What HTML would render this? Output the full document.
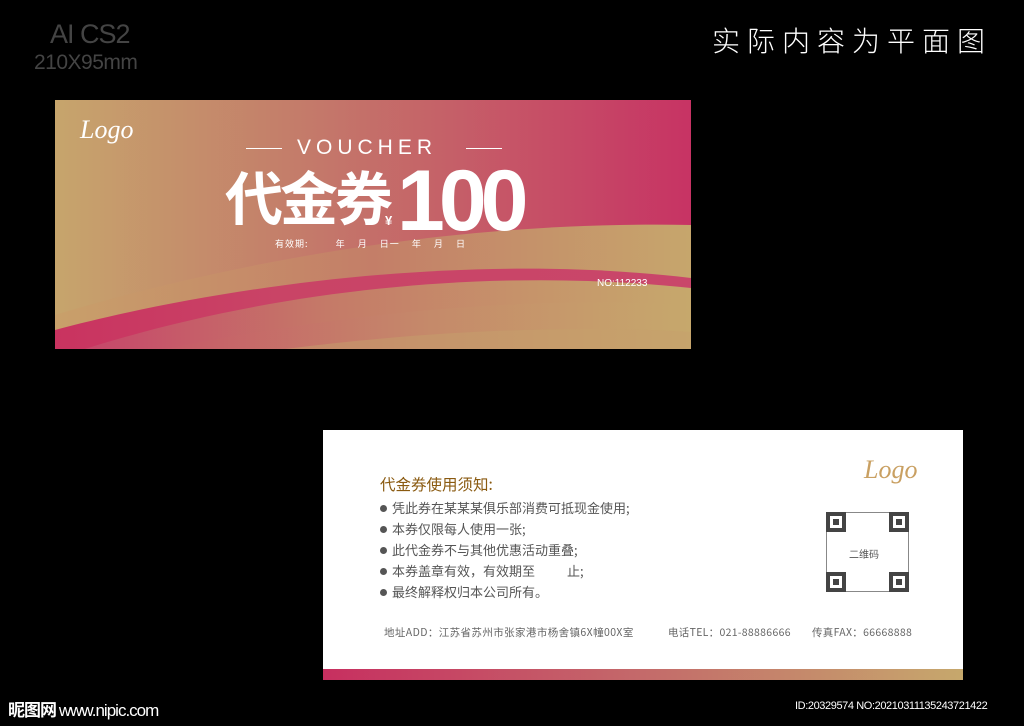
<!DOCTYPE html>
<html><head><meta charset="utf-8"><style>
*{margin:0;padding:0;box-sizing:border-box}
body{width:1024px;height:726px;background:#000;position:relative;overflow:hidden;font-family:"Liberation Sans","Noto Sans CJK SC",sans-serif}
.abs{position:absolute}
.b{display:inline-block;width:7px;height:7px;border-radius:50%;background:#555;margin-right:5px;vertical-align:1px}
</style></head><body>
<div class="abs" style="left:50px;top:19px;font-size:27px;color:#444;letter-spacing:-1px">AI CS2</div>
<div class="abs" style="left:34px;top:51px;font-size:21px;color:#444;letter-spacing:-0.5px">210X95mm</div>
<div class="abs" style="left:712px;top:20px;font-size:28px;color:#fff;letter-spacing:7px;font-family:'Noto Sans CJK SC',sans-serif;font-weight:300">实际内容为平面图</div>

<svg class="abs" style="left:55px;top:100px" width="636" height="249" viewBox="0 0 636 249">
<defs>
<linearGradient id="bg" x1="0" x2="1"><stop offset="0" stop-color="#c6a56c"/><stop offset="0.4" stop-color="#c47a6a"/><stop offset="1" stop-color="#c73364"/></linearGradient>
<linearGradient id="w1" x1="0" x2="1"><stop offset="0" stop-color="#c8a06a"/><stop offset="0.5" stop-color="#c47e68"/><stop offset="1" stop-color="#c6a66c"/></linearGradient>
<linearGradient id="w2" x1="0" x2="1"><stop offset="0" stop-color="#c93360"/><stop offset="0.35" stop-color="#c94466"/><stop offset="1" stop-color="#c9466a"/></linearGradient>
<linearGradient id="w3" x1="0" x2="1"><stop offset="0" stop-color="#c6466a"/><stop offset="0.4" stop-color="#c57a68"/><stop offset="1" stop-color="#c6a86c"/></linearGradient>
<linearGradient id="w4" x1="0" x2="1"><stop offset="0" stop-color="#c65a68"/><stop offset="0.5" stop-color="#c58a6a"/><stop offset="1" stop-color="#c6a86c"/></linearGradient>
</defs>
<rect width="636" height="249" fill="url(#bg)"/>
<path d="M0,249 L0,215 C150,170 380,120 636,125 L636,249 Z" fill="url(#w1)"/>
<path d="M0,249 L0,230 C150,190 400,150 636,178 L636,249 Z" fill="url(#w2)"/>
<path d="M30,249 C200,195 420,165 636,188 L636,249 Z" fill="url(#w3)"/>
<path d="M110,249 C280,215 460,195 636,205 L636,249 Z" fill="url(#w4)" opacity="0.8"/>
<path d="M230,249 C380,230 520,225 636,232 L636,249 Z" fill="#c6a06c" opacity="0.5"/>
</svg>
<div class="abs" style="left:80px;top:115px;font-family:'Liberation Serif',serif;font-style:italic;font-size:26px;color:#fff">Logo</div>
<div class="abs" style="left:246px;top:148px;width:36px;height:1px;background:#fff"></div>
<div class="abs" style="left:466px;top:148px;width:36px;height:1px;background:#fff"></div>
<div class="abs" style="left:297px;top:136px;font-size:21px;color:#fff;letter-spacing:5px">VOUCHER</div>
<div class="abs" style="left:225px;top:158px;font-size:58px;line-height:74px;color:#fff;font-family:'Noto Sans CJK SC',sans-serif;font-weight:700;letter-spacing:-3px">代金券</div>
<div class="abs" style="left:385px;top:213px;font-size:13px;color:#fff;font-weight:700">¥</div>
<div class="abs" style="left:397px;top:158px;font-size:86px;line-height:86px;color:#fff;font-weight:700;letter-spacing:-6px">100</div>
<div class="abs" style="left:275px;top:237px;font-size:9px;color:#fff;font-family:'Noto Sans CJK SC',sans-serif;white-space:pre;letter-spacing:1px">有效期:         年    月    日一    年    月    日</div>
<div class="abs" style="left:597px;top:278px;font-size:10px;color:#fff">NO:112233</div>

<div class="abs" style="left:323px;top:430px;width:640px;height:250px;background:#fff"></div>
<div class="abs" style="left:323px;top:669px;width:640px;height:11px;background:linear-gradient(90deg,#c72f60,#c46a6a 50%,#c6a86c)"></div>
<div class="abs" style="left:864px;top:455px;font-family:'Liberation Serif',serif;font-style:italic;font-size:26px;color:#c9a062">Logo</div>
<div class="abs" style="left:380px;top:473px;font-size:15.5px;color:#8a5a10;font-family:'Noto Sans CJK SC',sans-serif">代金券使用须知:</div>
<div class="abs" style="left:380px;top:497px;font-size:13px;line-height:21px;color:#555;font-family:'Noto Sans CJK SC',sans-serif;white-space:pre"><span class="b"></span>凭此券在某某某俱乐部消费可抵现金使用;
<span class="b"></span>本券仅限每人使用一张;
<span class="b"></span>此代金券不与其他优惠活动重叠;
<span class="b"></span>本券盖章有效，有效期至           止;
<span class="b"></span>最终解释权归本公司所有。</div>
<div class="abs" style="left:826px;top:512px;width:83px;height:80px;border:1px solid #888"></div>
<div class="abs" style="left:826px;top:512px;width:20px;height:20px;border:4px solid #444;box-shadow:inset 0 0 0 3px #fff;background:#444"></div>
<div class="abs" style="left:889px;top:512px;width:20px;height:20px;border:4px solid #444;box-shadow:inset 0 0 0 3px #fff;background:#444"></div>
<div class="abs" style="left:826px;top:572px;width:20px;height:20px;border:4px solid #444;box-shadow:inset 0 0 0 3px #fff;background:#444"></div>
<div class="abs" style="left:889px;top:572px;width:20px;height:20px;border:4px solid #444;box-shadow:inset 0 0 0 3px #fff;background:#444"></div>
<div class="abs" style="left:849px;top:546px;font-size:10px;color:#555;font-family:'Noto Sans CJK SC',sans-serif">二维码</div>
<div class="abs" style="left:384px;top:625px;font-size:10.5px;color:#666;font-family:'Noto Sans CJK SC',sans-serif;white-space:pre;letter-spacing:0.4px">地址ADD：江苏省苏州市张家港市杨舍镇6X幢00X室</div>
<div class="abs" style="left:668px;top:625px;font-size:10.5px;color:#666;font-family:'Noto Sans CJK SC',sans-serif;white-space:pre;letter-spacing:0.3px">电话TEL：021-88886666</div>
<div class="abs" style="left:812px;top:625px;font-size:10.5px;color:#666;font-family:'Noto Sans CJK SC',sans-serif;white-space:pre;letter-spacing:0.3px">传真FAX：66668888</div>

<div class="abs" style="left:8px;top:696px;font-size:17px;color:#fff;font-weight:700;font-family:'Noto Sans CJK SC',sans-serif;letter-spacing:-1px">昵图网 <span style="font-family:'Liberation Sans';font-weight:400">www.nipic.com</span></div>
<div class="abs" style="left:795px;top:700px;font-size:11px;color:#fff;letter-spacing:-0.4px">ID:20329574 NO:20210311135243721422</div>
</body></html>
